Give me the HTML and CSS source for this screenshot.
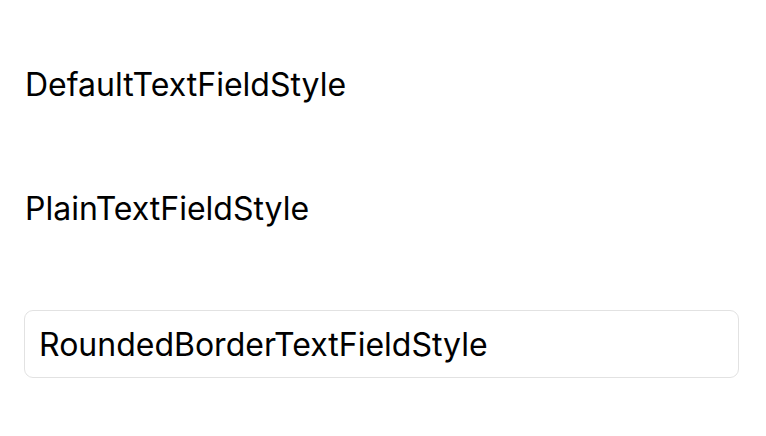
FILE: index.html
```html
<!DOCTYPE html>
<html lang="en">
<head>
  <meta charset="UTF-8">
  <title>Text field styles</title>
  <link rel="stylesheet" href="styles.css">
</head>
<body>

<div class="wrapper">
  <input type="text" class="field default" value="DefaultTextFieldStyle">
  <input type="text" class="field plain" value="PlainTextFieldStyle">
  <input type="text" class="field rounded" value="RoundedBorderTextFieldStyle">
</div>

</body>
</html>
```

FILE: styles.css
```css
body {
  margin: 0;
  background: #ffffff;
  font-family: 'Inter', 'Noto Sans', sans-serif;
}

.wrapper {
  display: flex;
  flex-direction: column;
  padding: 67px 27px 0 24px;
}

.field {
  display: block;
  box-sizing: border-box;
  width: 100%;
  height: 36px;
  padding: 0 0 0 1px;
  margin: 0;
  border: none;
  background: transparent;
  font-family: inherit;
  font-size: 32px;
  line-height: 36px;
  color: #000000;
  outline: none;
}

.field.plain {
  margin-top: 88px;
}

.field.rounded {
  margin-top: 83px;
  height: 68px;
  padding: 0 14px;
  border: 1px solid #e2e2e2;
  border-radius: 9px;
}
```
